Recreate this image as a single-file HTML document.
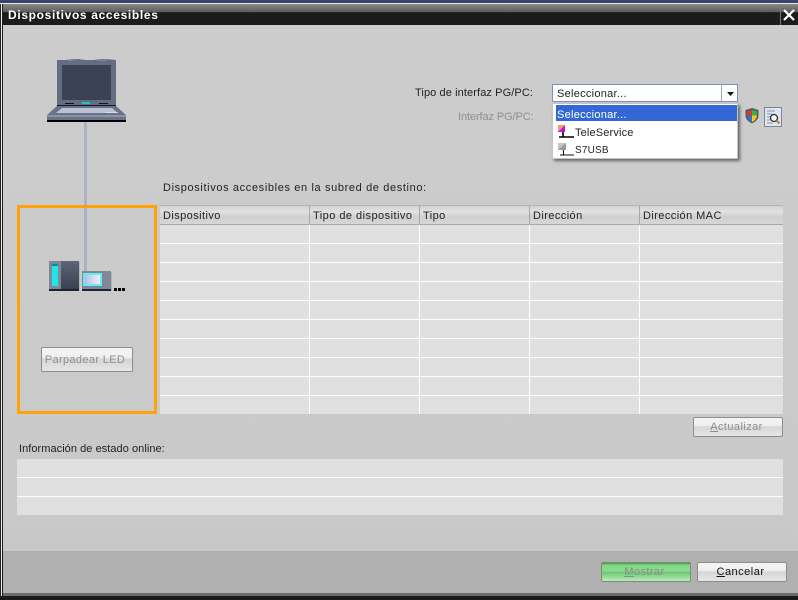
<!DOCTYPE html>
<html><head><meta charset="utf-8">
<style>
html,body{margin:0;padding:0;background:#cbcbcb}
#p{position:relative;width:798px;height:600px;overflow:hidden;background:linear-gradient(#cdcdcd,#c8c8c8);font-family:"Liberation Sans",sans-serif;font-size:11px;color:#222}
#p div{position:absolute;box-sizing:border-box}
.t{white-space:nowrap;line-height:14px;letter-spacing:.42px}
.b{background:linear-gradient(#f4f4f4 0,#f0f0f0 40%,#d6d6d6 50%,#e6e6e6 100%);border:1px solid #8c8c8c;border-radius:2px;text-align:center;line-height:19px;white-space:nowrap;letter-spacing:.42px;color:#8f8f8f;padding-right:3px}
u{text-underline-offset:1px}
</style></head><body><div id="p">
<div style="left:0;top:0;width:798px;height:3px;background:#3b4568"></div>
<div style="left:0;top:3px;width:798px;height:1px;background:#e8e8e8"></div>
<div style="left:3px;top:4px;width:795px;height:21px;background:linear-gradient(#8a8a8a 0,#5c5c5c 38%,#1c1c1c 40%,#1c1c1c 100%)"></div>
<div class="t" style="left:8px;top:7px;color:#fff;font-weight:bold;font-size:12px;letter-spacing:.66px;line-height:16px">Dispositivos accesibles</div>
<div style="left:780px;top:4px;width:1px;height:21px;background:#777"></div>
<div style="left:0;top:4px;width:1px;height:592px;background:#1a2230"></div>
<div style="left:1px;top:4px;width:1px;height:592px;background:#f0f0f0"></div>
<div style="left:2px;top:4px;width:1px;height:592px;background:#1c1c1c"></div>
<div style="left:3px;top:551px;width:795px;height:42px;background:#b0b0b0"></div>
<div style="left:3px;top:593px;width:795px;height:3px;background:#6a6a6a"></div>
<div style="left:0;top:596px;width:798px;height:4px;background:#1a1a1a"></div>

<svg style="position:absolute;left:0;top:0" width="798" height="600" viewBox="0 0 798 600">
<path d="M784 10l10 10M794 10l-10 10" stroke="#fff" stroke-width="2.2" fill="none"/>
<rect x="84" y="122" width="3" height="150" fill="#aab3c4"/>
<path d="M57 60h9l6-1h6l8 1h8l6-1h6l10 1v45H57z" fill="#646e83"/>
<path d="M66 59.5h12l-4 1h-6zM96 59.5h12l-2 1h-8z" fill="#8a92ad"/>
<rect x="62" y="65" width="49" height="35" fill="#3a4353"/>
<rect x="65" y="103" width="9" height="1" fill="#111"/>
<rect x="82" y="102" width="8" height="2" fill="#17c4c9"/>
<rect x="99" y="103" width="9" height="1" fill="#111"/>
<rect x="57" y="105" width="59" height="1" fill="#14161c"/>
<path d="M57 106h59l10 9v5H47v-5z" fill="#69738a"/>
<path d="M62 108h50l6 5H56z" fill="#b9c0cf"/>
<path d="M105 112h13l-1 1h-12z" fill="#d8dce2"/>
<rect x="47" y="115" width="79" height="2" fill="#8b93a4"/>
<rect x="47" y="120" width="79" height="2" fill="#000"/>
<rect x="49" y="261" width="13" height="30" fill="#7e8899"/>
<rect x="52" y="264" width="6" height="22" fill="#1fe6ea"/>
<rect x="52" y="264" width="6" height="2" fill="#0e8a98"/>
<defs><linearGradient id="g" x1="0" y1="0" x2="0" y2="1"><stop offset="0" stop-color="#5d6679"/><stop offset="1" stop-color="#353d4e"/></linearGradient>
<linearGradient id="s" x1="0" y1="0" x2="1" y2="0"><stop offset="0" stop-color="#b9bde8"/><stop offset="1" stop-color="#f0f1fb"/></linearGradient></defs>
<rect x="61" y="261" width="18" height="30" fill="url(#g)"/>
<rect x="49" y="289" width="30" height="2" fill="#1e2431"/>
<rect x="79" y="262" width="1" height="29" fill="#b4b4b4"/>
<rect x="82" y="271" width="29" height="20" fill="#7e8899"/>
<rect x="83" y="273" width="19" height="13" fill="#5feef2"/>
<rect x="85" y="275" width="15" height="9" fill="url(#s)"/>
<rect x="82" y="289" width="29" height="2" fill="#1e2431"/>
<rect x="111" y="272" width="1" height="19" fill="#b4b4b4"/>
<rect x="114" y="288" width="3" height="3" fill="#000"/><rect x="118" y="288" width="3" height="3" fill="#000"/><rect x="122" y="288" width="3" height="3" fill="#000"/>
</svg>

<div class="t" style="left:415px;top:86px;color:#222;letter-spacing:.1px">Tipo de interfaz PG/PC:</div>
<div class="t" style="left:458px;top:110px;color:#8f8f8f;letter-spacing:-.1px">Interfaz PG/PC:</div>

<div style="left:552px;top:84px;width:186px;height:18px;background:#fff;border:1px solid #7b93b8"></div>
<div style="left:721px;top:85px;width:1px;height:16px;background:#a8a8a8"></div>
<svg style="position:absolute;left:726px;top:91px" width="9" height="6"><path d="M1 1h7l-3.500 4z" fill="#111"/></svg>
<div class="t" style="left:557px;top:87px;letter-spacing:.27px">Seleccionar...</div>

<svg style="position:absolute;left:744px;top:107px" width="40" height="21">
<path d="M8 1l6.500 2v5.500c0 4-3.500 6.500-6.500 8-3-1.500-6.500-4-6.500-8V3z" fill="#5a5a5a"/>
<path d="M8 3v5.500H3V4.500z" fill="#d63a2a"/><path d="M8 3l5 1.500v4H8z" fill="#3fae3f"/>
<path d="M3 8.500h5V15c-2.500-1-4.500-3.500-5-6.500z" fill="#2e6fd0"/><path d="M8 8.500h5c-.5 3-2.500 5.500-5 6.500z" fill="#f0c828"/>
<rect x="20.500" y="0.500" width="17" height="19" fill="#dfe6f2" stroke="#7e8494"/>
<path d="M23 4h8M23 7h5M23 10h3M23 13h3M23 16h6" stroke="#8a93a8"/>
<circle cx="30" cy="11" r="3.500" fill="#f4f6fb" stroke="#2e2e2e" stroke-width="1.300"/>
<path d="M32.500 13.500l3 3" stroke="#b8862a" stroke-width="2"/>
</svg>

<div style="left:552px;top:103px;width:186px;height:56px;background:#fff;border:1px solid #c4c4c4;box-shadow:2px 2px 3px rgba(0,0,0,.5)"></div>
<div style="left:556px;top:105px;width:181px;height:16px;background:#3367d6"></div>
<div class="t" style="left:557px;top:108px;color:#fff;letter-spacing:.27px">Seleccionar...</div>
<svg style="position:absolute;left:557px;top:124px" width="18" height="34">
<path d="M1 1h7L1 8z" fill="#f0a070"/><path d="M8 1v7H1z" fill="#d010c8"/>
<path d="M6 8v5h11M2 13h4" stroke="#000" stroke-width="1.600" fill="none"/>
<path d="M1 19h8v7H1z" fill="#9a9a9a"/><path d="M1 19h8l-8 7z" fill="#c4c4c4"/>
<path d="M6.500 26v5h10.500M3 31h3.500" stroke="#111" stroke-width="1.100" fill="none"/>
</svg>
<div class="t" style="left:575px;top:126px;letter-spacing:.15px">TeleService</div>
<div class="t" style="left:575px;top:144px;font-size:10px;letter-spacing:.2px">S7USB</div>

<div style="left:17px;top:205px;width:140px;height:209px;border:3px solid #ffa20a"></div>
<div class="b" style="left:41px;top:347px;width:92px;height:25px;line-height:24px;letter-spacing:.35px;padding-right:4px">Parpadear LED</div>

<div class="t" style="left:163px;top:181px;letter-spacing:.63px">Dispositivos accesibles en la subred de destino:</div>

<div style="left:160px;top:205px;width:623px;height:209px;background:#e0e0e0"></div>
<div style="left:160px;top:205px;width:623px;height:20px;background:linear-gradient(#d2d2d2 0,#e2e2e2 30%,#cfcfcf 60%,#d6d6d6 100%);border-top:1px solid #b4b4b4;border-bottom:1px solid #a8a8a8"></div>
<svg style="position:absolute;left:160px;top:205px" width="623" height="209">
<g fill="#fff">
<rect x="0" y="38" width="623" height="1"/><rect x="0" y="57" width="623" height="1"/><rect x="0" y="76" width="623" height="1"/><rect x="0" y="95" width="623" height="1"/><rect x="0" y="114" width="623" height="1"/><rect x="0" y="133" width="623" height="1"/><rect x="0" y="152" width="623" height="1"/><rect x="0" y="171" width="623" height="1"/><rect x="0" y="190" width="623" height="1"/>
<rect x="149" y="20" width="1" height="189"/><rect x="259" y="20" width="1" height="189"/><rect x="369" y="20" width="1" height="189"/><rect x="479" y="20" width="1" height="189"/>
</g>
<g fill="#a8a8a8"><rect x="149" y="1" width="1" height="18"/><rect x="259" y="1" width="1" height="18"/><rect x="369" y="1" width="1" height="18"/><rect x="479" y="1" width="1" height="18"/></g>
</svg>
<div class="t" style="left:163px;top:209px">Dispositivo</div>
<div class="t" style="left:313px;top:209px;letter-spacing:.46px">Tipo de dispositivo</div>
<div class="t" style="left:423px;top:209px">Tipo</div>
<div class="t" style="left:533px;top:209px">Dirección</div>
<div class="t" style="left:643px;top:209px">Dirección MAC</div>

<div class="b" style="left:693px;top:417px;width:90px;height:20px"><u>A</u>ctualizar</div>

<div class="t" style="left:19px;top:442px;letter-spacing:.05px;font-size:11px">Información de estado online:</div>
<div style="left:17px;top:459px;width:766px;height:56px;background:#e0e0e0"></div>
<div style="left:17px;top:477px;width:766px;height:1px;background:#fff"></div>
<div style="left:17px;top:496px;width:766px;height:1px;background:#fff"></div>

<div class="b" style="left:601px;top:562px;width:90px;height:20px;background:linear-gradient(#3f9a4a 0,#7fd884 12%,#8ed992 45%,#6cc873 52%,#b8ecb8 100%);border-color:#7c8c7c;color:#8a8a8a"><u>M</u>ostrar</div>
<div class="b" style="left:697px;top:562px;width:90px;height:20px;color:#111;letter-spacing:.5px"><u>C</u>ancelar</div>
</div></body></html>
